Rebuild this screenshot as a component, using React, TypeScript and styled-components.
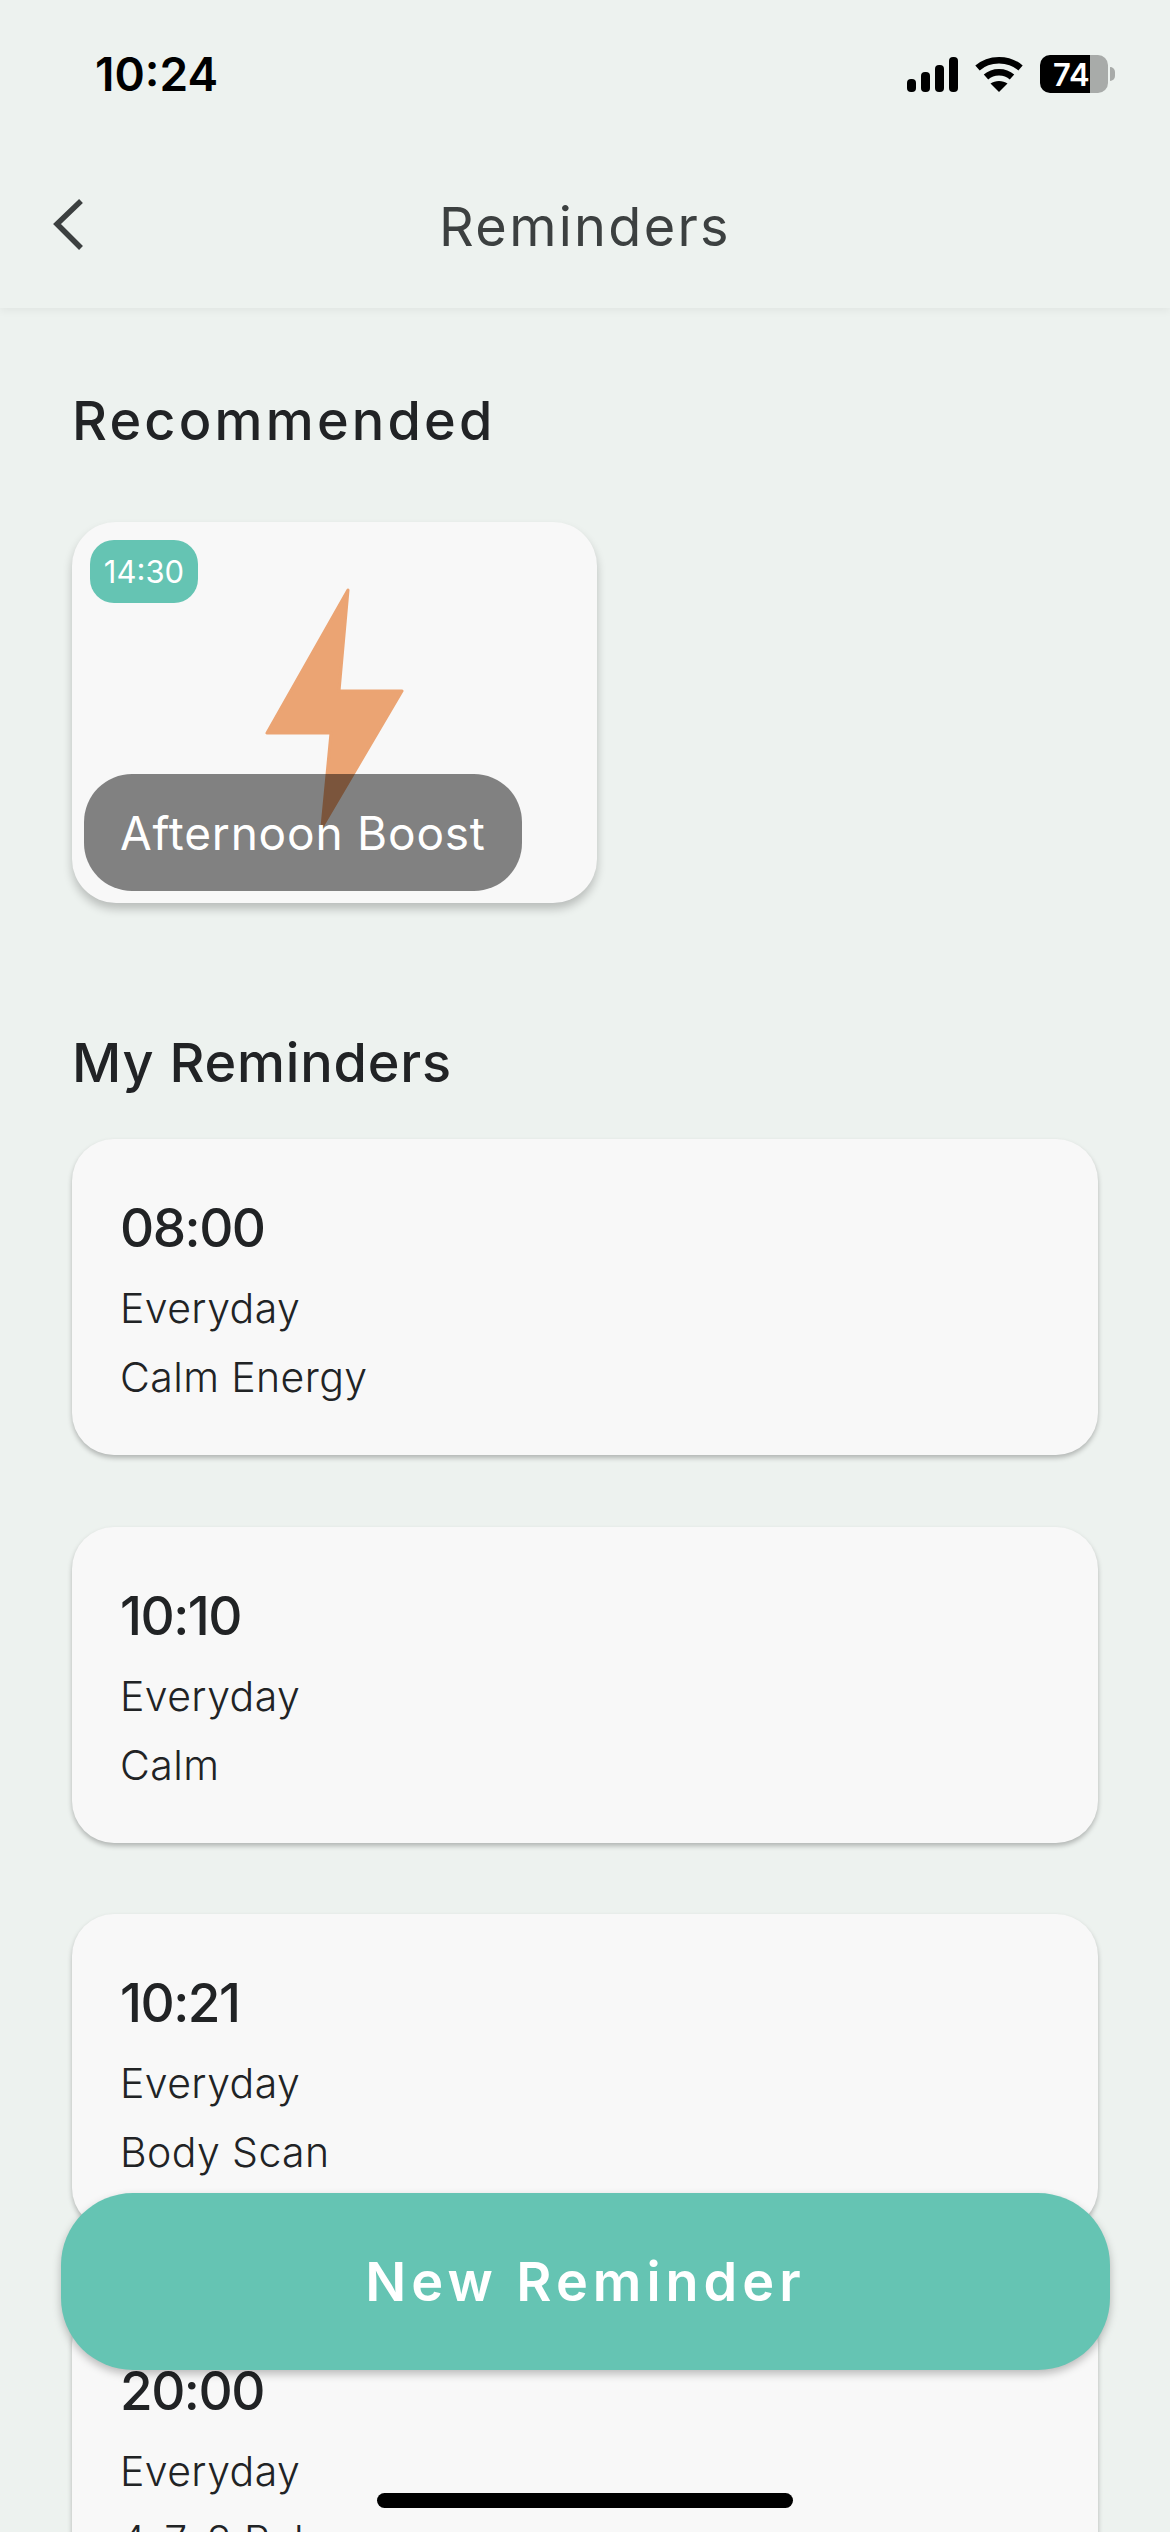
import React from "react";
import styled, { createGlobalStyle } from "styled-components";

const Global = createGlobalStyle`
  html, body { margin: 0; padding: 0; background: #edf2ef; }
  * { box-sizing: border-box; }
`;

const FONT = `Inter, "Noto Sans", "Liberation Sans", sans-serif`;

const Screen = styled.div`
  position: relative;
  width: 1170px;
  height: 2532px;
  overflow: hidden;
  background: #edf2ef;
  font-family: ${FONT};
  color: #212325;
`;

const TopBar = styled.header`
  height: 308px;
  display: flex;
  flex-direction: column;
  background: #edf2ef;
  box-shadow: 0 3px 8px rgba(0, 0, 0, 0.05);
  position: relative;
  z-index: 1;
`;

const StatusBar = styled.div`
  height: 148px;
  padding: 0 62px 0 95px;
  display: flex;
  align-items: center;
  justify-content: space-between;
`;

const Clock = styled.span`
  font-size: 46px;
  font-weight: 600;
  color: #000;
`;

const StatusIcons = styled.div`
  display: flex;
  align-items: center;
  gap: 17px;
`;

const Battery = styled.div`
  position: relative;
  width: 68px;
  height: 38px;
  border-radius: 10px;
  background: linear-gradient(to right, #000 0 50px, #a8aba9 50px 100%);
  display: flex;
  align-items: center;
  padding-left: 13px;
  color: #fff;
  font-size: 31px;
  font-weight: 600;
  line-height: 1;
  &::after {
    content: "";
    position: absolute;
    right: -7px;
    top: 12px;
    width: 5px;
    height: 14px;
    border-radius: 0 7px 7px 0;
    background: #a8aba9;
  }
`;

const NavRow = styled.nav`
  position: relative;
  flex: 1;
  display: flex;
  align-items: center;
  justify-content: center;
`;

const BackButton = styled.svg`
  position: absolute;
  left: 52px;
  top: 50px;
`;

const Title = styled.h1`
  margin: -4px 0 0;
  font-size: 54px;
  font-weight: 400;
  color: #3c4040;
  letter-spacing: 2.3px;
`;

const Body = styled.main`
  padding: 83px 72px 0;
`;

const SectionTitle = styled.h2<{ $tracking: number }>`
  margin: 0;
  height: 60px;
  line-height: 60px;
  font-size: 54px;
  font-weight: 500;
  color: #212325;
  letter-spacing: ${(p) => p.$tracking}px;
`;

const FeaturedCard = styled.section`
  position: relative;
  width: 525px;
  height: 381px;
  margin: 71px 0 130px;
  padding: 18px 12px 12px;
  display: flex;
  flex-direction: column;
  align-items: flex-start;
  justify-content: space-between;
  background: #f8f8f8;
  border-radius: 44px;
  box-shadow: 0 6px 10px rgba(0, 0, 0, 0.22);
`;

const Badge = styled.span`
  position: relative;
  height: 63px;
  width: 108px;
  margin-left: 6px;
  display: flex;
  align-items: center;
  justify-content: center;
  border-radius: 24px;
  background: #65c4b3;
  color: #fff;
  font-size: 31px;
  font-weight: 400;
`;

const Bolt = styled.svg`
  position: absolute;
  left: 192px;
  top: 65px;
`;

const Pill = styled.div`
  position: relative;
  width: 438px;
  height: 117px;
  padding-left: 36px;
  display: flex;
  align-items: center;
  border-radius: 48px;
  background: rgba(0, 0, 0, 0.48);
  color: #fff;
  font-size: 46px;
  font-weight: 400;
  letter-spacing: 0.8px;
`;

const ReminderList = styled.div`
  margin-top: 46px;
  display: flex;
  flex-direction: column;
  gap: 71.5px;
`;

const ReminderCard = styled.article`
  height: 316px;
  padding: 59px 48px 0;
  background: #f8f8f8;
  border-radius: 42px;
  box-shadow: 0 3px 5px rgba(0, 0, 0, 0.25);
  flex: none;
`;

const Time = styled.div`
  font-size: 53px;
  line-height: 60px;
  font-weight: 500;
  color: #212325;
  letter-spacing: -1.5px;
`;

const DetailStack = styled.div`
  margin-top: 16px;
  display: flex;
  flex-direction: column;
`;

const Detail = styled.span`
  font-size: 41px;
  line-height: 69px;
  font-weight: 300;
  color: #212325;
  letter-spacing: 0.4px;
`;

const PrimaryButton = styled.button`
  position: absolute;
  left: 61px;
  top: 2193px;
  width: 1049px;
  height: 177px;
  border: 0;
  border-radius: 72px;
  background: #65c4b3;
  color: #fff;
  font-family: ${FONT};
  font-size: 54px;
  font-weight: 600;
  letter-spacing: 5px;
  box-shadow: 0 4px 8px rgba(0, 0, 0, 0.25);
`;

const HomeIndicator = styled.div`
  position: absolute;
  left: 377px;
  top: 2493px;
  width: 416px;
  height: 15px;
  border-radius: 8px;
  background: #000;
`;

const reminders = [
  { time: "08:00", days: "Everyday", name: "Calm Energy" },
  { time: "10:10", days: "Everyday", name: "Calm" },
  { time: "10:21", days: "Everyday", name: "Body Scan" },
  { time: "20:00", days: "Everyday", name: "4-7-8 Relax" },
];

export default function App() {
  return (
    <Screen>
      <Global />
      <TopBar>
        <StatusBar>
          <Clock>10:24</Clock>
          <StatusIcons>
            <svg width="51" height="35" viewBox="0 0 51 35" fill="#000">
              <rect x="0" y="22" width="9" height="13" rx="4" />
              <rect x="14" y="15" width="9" height="20" rx="4" />
              <rect x="28" y="8" width="9" height="27" rx="4" />
              <rect x="42" y="0" width="9" height="35" rx="4" />
            </svg>
            <svg width="48" height="36" viewBox="0 0 48 36" fill="none">
              <path d="M2.5 12 C14 1.5 34 1.5 45.5 12" stroke="#000" strokeWidth="6.5" />
              <path d="M11 21 C18 14.5 30 14.5 37 21" stroke="#000" strokeWidth="6.5" />
              <path d="M24 36 L15.5 27.5 C20 24 28 24 32.5 27.5 Z" fill="#000" />
            </svg>
            <Battery>74</Battery>
          </StatusIcons>
        </StatusBar>
        <NavRow>
          <BackButton width="32" height="54" viewBox="0 0 32 54" fill="none">
            <path d="M29 3 L5 26 L29 50" stroke="#3c4040" strokeWidth="5.5" />
          </BackButton>
          <Title>Reminders</Title>
        </NavRow>
      </TopBar>
      <Body>
        <SectionTitle $tracking={3.2}>Recommended</SectionTitle>
        <FeaturedCard>
          <Bolt width="142" height="244" viewBox="0 0 142 244">
            <path
              d="M84 3 L3 146 L67 146 L58 240 L138 104 L75 104 L84 3 Z"
              fill="#eba473"
              stroke="#eba473"
              strokeWidth="3"
              strokeLinejoin="round"
            />
          </Bolt>
          <Badge>14:30</Badge>
          <Pill>Afternoon Boost</Pill>
        </FeaturedCard>
        <SectionTitle $tracking={0.8}>My Reminders</SectionTitle>
        <ReminderList>
          {reminders.map((r) => (
            <ReminderCard key={r.time}>
              <Time>{r.time}</Time>
              <DetailStack>
                <Detail>{r.days}</Detail>
                <Detail>{r.name}</Detail>
              </DetailStack>
            </ReminderCard>
          ))}
        </ReminderList>
      </Body>
      <PrimaryButton>New Reminder</PrimaryButton>
      <HomeIndicator />
    </Screen>
  );
}
